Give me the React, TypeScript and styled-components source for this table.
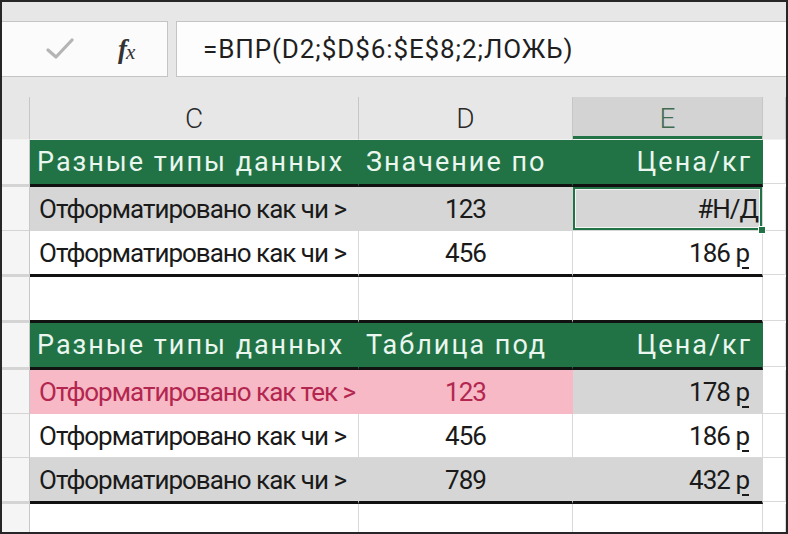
import React from 'react'
import styled, { createGlobalStyle } from 'styled-components'

const GlobalStyle = createGlobalStyle`
  html, body {
    margin     : 0;
    padding    : 0;
    background : #ffffff;
  }
`

const GREEN = '#217346'
const GRID = '#d9d9d9'

const Frame = styled.div`
  width       : 788px;
  height      : 534px;
  box-sizing  : border-box;
  border      : 2px solid #262626;
  background  : #ffffff;
  overflow    : hidden;
  display     : flex;
  flex-direction : column;
  font-family : Roboto, "Liberation Sans", sans-serif;
  color       : #1a1a1a;
`

const FormulaBar = styled.div`
  height      : 95px;
  flex        : none;
  box-sizing  : border-box;
  padding-top : 19px;
  display     : flex;
  gap         : 8px;
  background  : #e7e7e7;
`

const NameBox = styled.div`
  width       : 166px;
  height      : 56px;
  box-sizing  : border-box;
  border      : 1px solid #c4c4c4;
  border-left : none;
  background  : #fbfbfb;
  display     : flex;
  align-items : center;
  padding-left: 44px;
  gap         : 44px;
`

const Fx = styled.span`
  font-family : "Liberation Serif", serif;
  font-style  : italic;
  font-weight : bold;
  font-size   : 27px;
  color       : #333;
  letter-spacing : -1px;

  small {
    font-size   : 21px;
    font-weight : normal;
    position    : relative;
    top         : 1px;
  }
`

const FormulaBox = styled.div`
  flex           : 1;
  height         : 56px;
  box-sizing     : border-box;
  border         : 1px solid #c4c4c4;
  border-right   : none;
  background     : #fdfdfd;
  display        : flex;
  align-items    : center;
  padding-left   : 26px;
  font-size      : 26px;
  letter-spacing : 0.9px;
  color          : #1f1f1f;
`

const Row = styled.div`
  display               : grid;
  grid-template-columns : 28px 329px 214px 190px 1fr;
  flex                  : none;
`

type Edge = 'grid' | 'thick' | 'none'

const Cell = styled.div<{ $fill?: string; $edge?: Edge; $align?: string; $tone?: string; $pad?: number; $h?: number }>`
  position        : relative;
  box-sizing      : content-box;
  height          : ${ p => p.$h ?? 43 }px;
  background      : ${ p => p.$fill ?? '#ffffff' };
  border-right    : 1px solid ${ p => p.$fill ? p.$fill : GRID };
  border-bottom   : ${ p => p.$edge === 'thick' ? '3px solid #111' : p.$edge === 'none' ? '0' : `1px solid ${ p.$fill ? p.$fill : GRID }` };
  display         : flex;
  align-items     : center;
  justify-content : ${ p => p.$align ?? 'flex-start' };
  padding         : 0 ${ p => p.$pad ?? 0 }px 0 ${ p => p.$align === 'flex-start' || !p.$align ? 9 : 0 }px;
  font-size       : 26px;
  letter-spacing  : -1px;
  color           : ${ p => p.$tone ?? '#1a1a1a' };
  white-space     : nowrap;
  overflow        : hidden;
`

const RowHead = styled.div<{ $h?: number; $edge?: Edge }>`
  height        : ${ p => p.$h ?? 43 }px;
  background    : #f5f5f5;
  border-right  : 1px solid #c8c8c8;
  border-bottom : ${ p => p.$edge === 'thick' ? '3px' : '1px' } solid #d4d4d4;
`

const ColHead = styled.div<{ $active?: boolean }>`
  height          : 42px;
  background      : ${ p => p.$active ? '#d3d3d3' : '#e7e7e7' };
  border-right    : 1px solid #c6c6c6;
  border-bottom   : 1px solid #f2f2f2;
  box-shadow      : ${ p => p.$active ? `inset 0 -3px 0 ${ GREEN }` : 'none' };
  display         : flex;
  align-items     : center;
  justify-content : center;
  font-size       : 28px;
  font-weight     : 300;
  color           : ${ p => p.$active ? '#3f6b4f' : '#2a2a2a' };
`

const HeadCell = styled(Cell)`
  background     : ${ GREEN };
  border-right   : 1px solid ${ GREEN };
  color          : #eaf6ee;
  font-size      : 27px;
  font-weight    : 400;
  letter-spacing : 2px;
`

const Selected = styled(Cell)`
  box-shadow : inset 0 0 0 2px ${ GREEN }, inset 0 0 0 3px #f4f4f4;
  overflow   : visible;
`

const Handle = styled.span`
  position   : absolute;
  right      : -4px;
  bottom     : -4px;
  width      : 6px;
  height     : 6px;
  background : ${ GREEN };
  border     : 1px solid #ffffff;
  z-index    : 2;
`

const Rub = styled.span`
  text-decoration           : underline;
  text-decoration-thickness : 2px;
  text-underline-offset     : 5px;
`

const Sheet = styled.div`
  flex           : 1;
  display        : flex;
  flex-direction : column;
  background     : #ffffff;
`

const Check = () => (
  <svg width="28" height="22" viewBox="0 0 28 22">
    <path d="M2 12 L10 19 L26 2" fill="none" stroke="#b4b4b4" strokeWidth="3.2" strokeLinecap="round" strokeLinejoin="round" />
  </svg>
)

const Price = ({ v }: { v: string }) => <span>{ v } <Rub>р</Rub></span>

type DataRow = {
  label : string
  value : string
  price : React.ReactNode
  fill? : string
  pink? : boolean
  edge? : Edge
}

const PINK = '#f6b9c5'
const GREY = '#d6d6d6'

const tableOne: DataRow[] = [
  { label: 'Отформатировано как чи >', value: '123', price: '#Н/Д', fill: GREY },
  { label: 'Отформатировано как чи >', value: '456', price: <Price v="186" />, edge: 'thick' },
]

const tableTwo: DataRow[] = [
  { label: 'Отформатировано как тек >', value: '123', price: <Price v="178" />, pink: true },
  { label: 'Отформатировано как чи >', value: '456', price: <Price v="186" /> },
  { label: 'Отформатировано как чи >', value: '789', price: <Price v="432" />, fill: GREY, edge: 'thick' },
]

const Header = ({ middle }: { middle: string }) => (
  <Row>
    <RowHead $h={ 44 } $edge="thick" />
    <HeadCell $h={ 44 } $edge="thick" style={{ paddingLeft: 7 }}>Разные типы данных</HeadCell>
    <HeadCell $h={ 44 } $edge="thick" style={{ paddingLeft: 7 }}>{ middle }</HeadCell>
    <HeadCell $h={ 44 } $edge="thick" $align="flex-end" $pad={ 10 }>Цена/кг</HeadCell>
    <Cell />
  </Row>
)

const Body = ({ row, selected }: { row: DataRow; selected?: boolean }) => {
  const left = row.pink ? PINK : row.fill
  const tone = row.pink ? '#b3264f' : undefined
  const right = row.pink ? GREY : row.fill
  return (
    <Row>
      <RowHead $edge={ row.edge } />
      <Cell $fill={ left } $tone={ tone } $edge={ row.edge }>{ row.label }</Cell>
      <Cell $fill={ left } $tone={ tone } $edge={ row.edge } $align="center">{ row.value }</Cell>
      { selected
        ? <Selected $fill={ right } $edge={ row.edge } $align="flex-end" $pad={ 4 }>{ row.price }<Handle /></Selected>
        : <Cell $fill={ right } $edge={ row.edge } $align="flex-end" $pad={ 13 }>{ row.price }</Cell> }
      <Cell $edge={ row.edge === 'thick' ? 'grid' : row.edge } />
    </Row>
  )
}

const Empty = ({ edge, h }: { edge?: Edge; h?: number }) => (
  <Row>
    <RowHead $edge={ edge } $h={ h } />
    <Cell $edge={ edge } $h={ h } />
    <Cell $edge={ edge } $h={ h } />
    <Cell $edge={ edge } $h={ h } />
    <Cell $h={ h } />
  </Row>
)

export default function App() {
  return (
    <>
      <GlobalStyle />
      <Frame>
        <FormulaBar>
          <NameBox>
            <Check />
            <Fx>f<small>x</small></Fx>
          </NameBox>
          <FormulaBox>=ВПР(D2;$D$6:$E$8;2;ЛОЖЬ)</FormulaBox>
        </FormulaBar>
        <Sheet>
          <Row>
            <ColHead />
            <ColHead>C</ColHead>
            <ColHead>D</ColHead>
            <ColHead $active>E</ColHead>
            <ColHead />
          </Row>
          <Header middle="Значение по" />
          <Body row={ tableOne[0] } selected />
          <Body row={ tableOne[1] } />
          <Empty edge="thick" />
          <Header middle="Таблица под" />
          { tableTwo.map((r, i) => <Body key={ i } row={ r } />) }
          <Empty h={ 40 } />
        </Sheet>
      </Frame>
    </>
  )
}
